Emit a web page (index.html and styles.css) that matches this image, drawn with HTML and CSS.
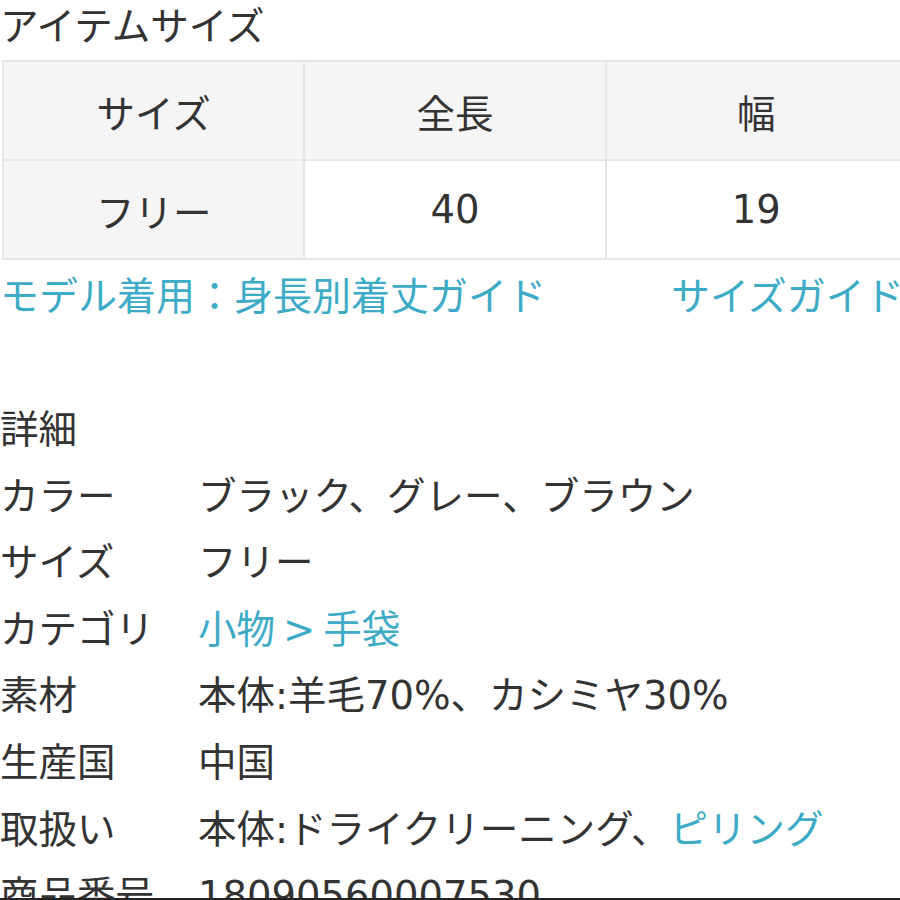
FILE: index.html
```html
<!DOCTYPE html>
<html lang="ja">
<head>
<meta charset="utf-8">
<link rel="stylesheet" href="styles.css">
</head>
<body>
<div class="page">
  <h2 class="title">アイテムサイズ</h2>
  <table class="size-table">
    <tr class="head">
      <th class="first">サイズ</th>
      <th>全長</th>
      <th>幅</th>
    </tr>
    <tr>
      <td class="first">フリー</td>
      <td>40</td>
      <td>19</td>
    </tr>
  </table>
  <div class="links">
    <a class="link">モデル着用：身長別着丈ガイド</a>
    <a class="link guide">サイズガイド</a>
  </div>
  <div class="details">
    <div class="details-title">詳細</div>
    <div class="row"><span class="label">カラー</span><span class="value">ブラック、グレー、ブラウン</span></div>
    <div class="row"><span class="label">サイズ</span><span class="value">フリー</span></div>
    <div class="row"><span class="label">カテゴリ</span><span class="value"><a class="link">小物<span class="gt">&gt;</span>手袋</a></span></div>
    <div class="row"><span class="label">素材</span><span class="value">本体:羊毛70%、カシミヤ30%</span></div>
    <div class="row"><span class="label">生産国</span><span class="value">中国</span></div>
    <div class="row"><span class="label">取扱い</span><span class="value">本体:ドライクリーニング、<a class="link">ピリング</a></span></div>
    <div class="row"><span class="label">商品番号</span><span class="value">18090560007530</span></div>
  </div>
</div>
<div class="edge"></div>
</body>
</html>
```
FILE: styles.css
```css
html, body {
  margin: 0;
  padding: 0;
  background: #fff;
  overflow: hidden;
  height: 900px;
}
body {
  position: relative;
  font-family: "DejaVu Sans", "Noto Sans CJK JP", sans-serif;
  color: #333;
  font-size: 38.5px;
}
.page {
  width: 900px;
  overflow: hidden;
  height: 900px;
}
.title {
  margin: 0 0 6px 0;
  font-size: 38.5px;
  font-weight: normal;
  line-height: 54px;
  white-space: nowrap;
}
.size-table {
  margin-left: 2px;
  width: 906px;
  border-collapse: collapse;
  table-layout: fixed;
}
.size-table th, .size-table td {
  border: 2px solid #e6e6e6;
  height: 97px;
  padding: 0;
  text-align: center;
  font-weight: normal;
  font-size: 38.5px;
  color: #333;
}
.size-table .head th { background: #f5f5f5; }
.size-table td.first { background: #f5f5f5; }
.size-table td { background: #fff; }
.links {
  display: flex;
  white-space: nowrap;
  line-height: 66px;
  font-size: 39px;
  margin-top: 4px;
}
.link {
  color: #3eabc6;
  text-decoration: none;
}
.gt { margin: 0 8px; }
.guide { margin-left: 125px; }
.details {
  margin-top: 67px;
}
.details-title, .row {
  line-height: 66.6px;
  white-space: nowrap;
}
.row { display: flex; }
.label { width: 198px; flex: none; }
.edge {
  position: absolute;
  left: 0;
  right: 0;
  bottom: 0;
  height: 2px;
  background: #222;
}
```
